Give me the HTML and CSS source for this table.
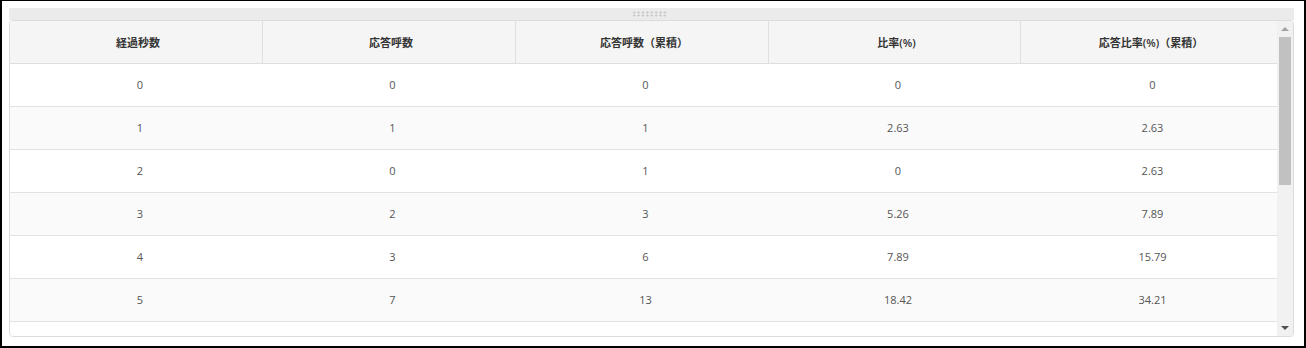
FILE: index.html
```html
<!DOCTYPE html>
<html lang="ja">
<head>
<meta charset="utf-8">
<title>応答秒数</title>
<link rel="stylesheet" href="styles.css">
</head>
<body>
<div class="frame">
  <div class="handle"><span class="grip"></span></div>
  <div class="grid">
    <div class="viewport">
      <div class="row head">
        <div class="cell">経過秒数</div>
        <div class="cell">応答呼数</div>
        <div class="cell">応答呼数（累積）</div>
        <div class="cell">比率(%)</div>
        <div class="cell">応答比率(%)（累積）</div>
      </div>
      <div class="row"><div class="cell">0</div><div class="cell">0</div><div class="cell">0</div><div class="cell">0</div><div class="cell">0</div></div>
      <div class="row alt"><div class="cell">1</div><div class="cell">1</div><div class="cell">1</div><div class="cell">2.63</div><div class="cell">2.63</div></div>
      <div class="row"><div class="cell">2</div><div class="cell">0</div><div class="cell">1</div><div class="cell">0</div><div class="cell">2.63</div></div>
      <div class="row alt"><div class="cell">3</div><div class="cell">2</div><div class="cell">3</div><div class="cell">5.26</div><div class="cell">7.89</div></div>
      <div class="row"><div class="cell">4</div><div class="cell">3</div><div class="cell">6</div><div class="cell">7.89</div><div class="cell">15.79</div></div>
      <div class="row alt"><div class="cell">5</div><div class="cell">7</div><div class="cell">13</div><div class="cell">18.42</div><div class="cell">34.21</div></div>
      <div class="row"><div class="cell"></div><div class="cell"></div><div class="cell"></div><div class="cell"></div><div class="cell"></div></div>
    </div>
    <div class="scrollbar">
      <div class="arrow up"></div>
      <div class="track"><div class="thumb"></div></div>
      <div class="arrow down"></div>
    </div>
  </div>
</div>
</body>
</html>
```

FILE: styles.css
```css
html, body {
  margin: 0;
  padding: 0;
  background: #fff;
}
.frame {
  width: 1306px;
  height: 348px;
  box-sizing: border-box;
  border: 2px solid #000;
  border-top-width: 1px;
  padding: 7px 10px 9px 7px;
  display: flex;
  flex-direction: column;
  font-family: "Open Sans", "Noto Sans CJK JP", sans-serif;
  font-size: 11px;
}
.handle {
  height: 12px;
  background: #ebebeb;
  display: flex;
  justify-content: center;
  align-items: center;
}
.grip {
  width: 35px;
  height: 6px;
  margin-right: 4px;
  background-image: radial-gradient(circle, #c9c9c9 0.9px, transparent 1.3px);
  background-size: 4.4px 3px;
}
.grid {
  flex: 1;
  display: flex;
  border: 1px solid #dcdcdc;
  border-radius: 4px;
  overflow: hidden;
  min-height: 0;
}
.viewport {
  flex: 1;
  overflow: hidden;
}
.row {
  display: grid;
  grid-template-columns: 252px 253px 253px 252px 1fr;
  height: 43px;
  box-sizing: border-box;
  border-bottom: 1px solid #e2e2e2;
  background: #fff;
  color: #555;
}
.row.alt {
  background: #fafafa;
}
.row.head {
  background: #f5f5f5;
  color: #333;
  font-weight: 600;
  border-bottom: 1px solid #dedede;
}
.cell {
  display: flex;
  align-items: center;
  justify-content: center;
  padding: 0 0 2px 8px;
}
.head .cell {
  padding: 0 0 1px 4px;
}
.head .cell + .cell {
  border-left: 1px solid #e0e0e0;
}
.scrollbar {
  width: 16px;
  background: #f1f1f1;
  display: flex;
  flex-direction: column;
  align-items: center;
}
.arrow {
  height: 16px;
  width: 16px;
  display: flex;
  align-items: center;
  justify-content: center;
}
.arrow::before {
  content: "";
  border-left: 4px solid transparent;
  border-right: 4px solid transparent;
}
.arrow.up::before {
  border-bottom: 4px solid #a3a3a3;
}
.arrow.down::before {
  border-top: 4px solid #505050;
}
.track {
  flex: 1;
  width: 100%;
  display: flex;
  justify-content: center;
}
.thumb {
  width: 12px;
  height: 148px;
  background: #c1c1c1;
}
```
